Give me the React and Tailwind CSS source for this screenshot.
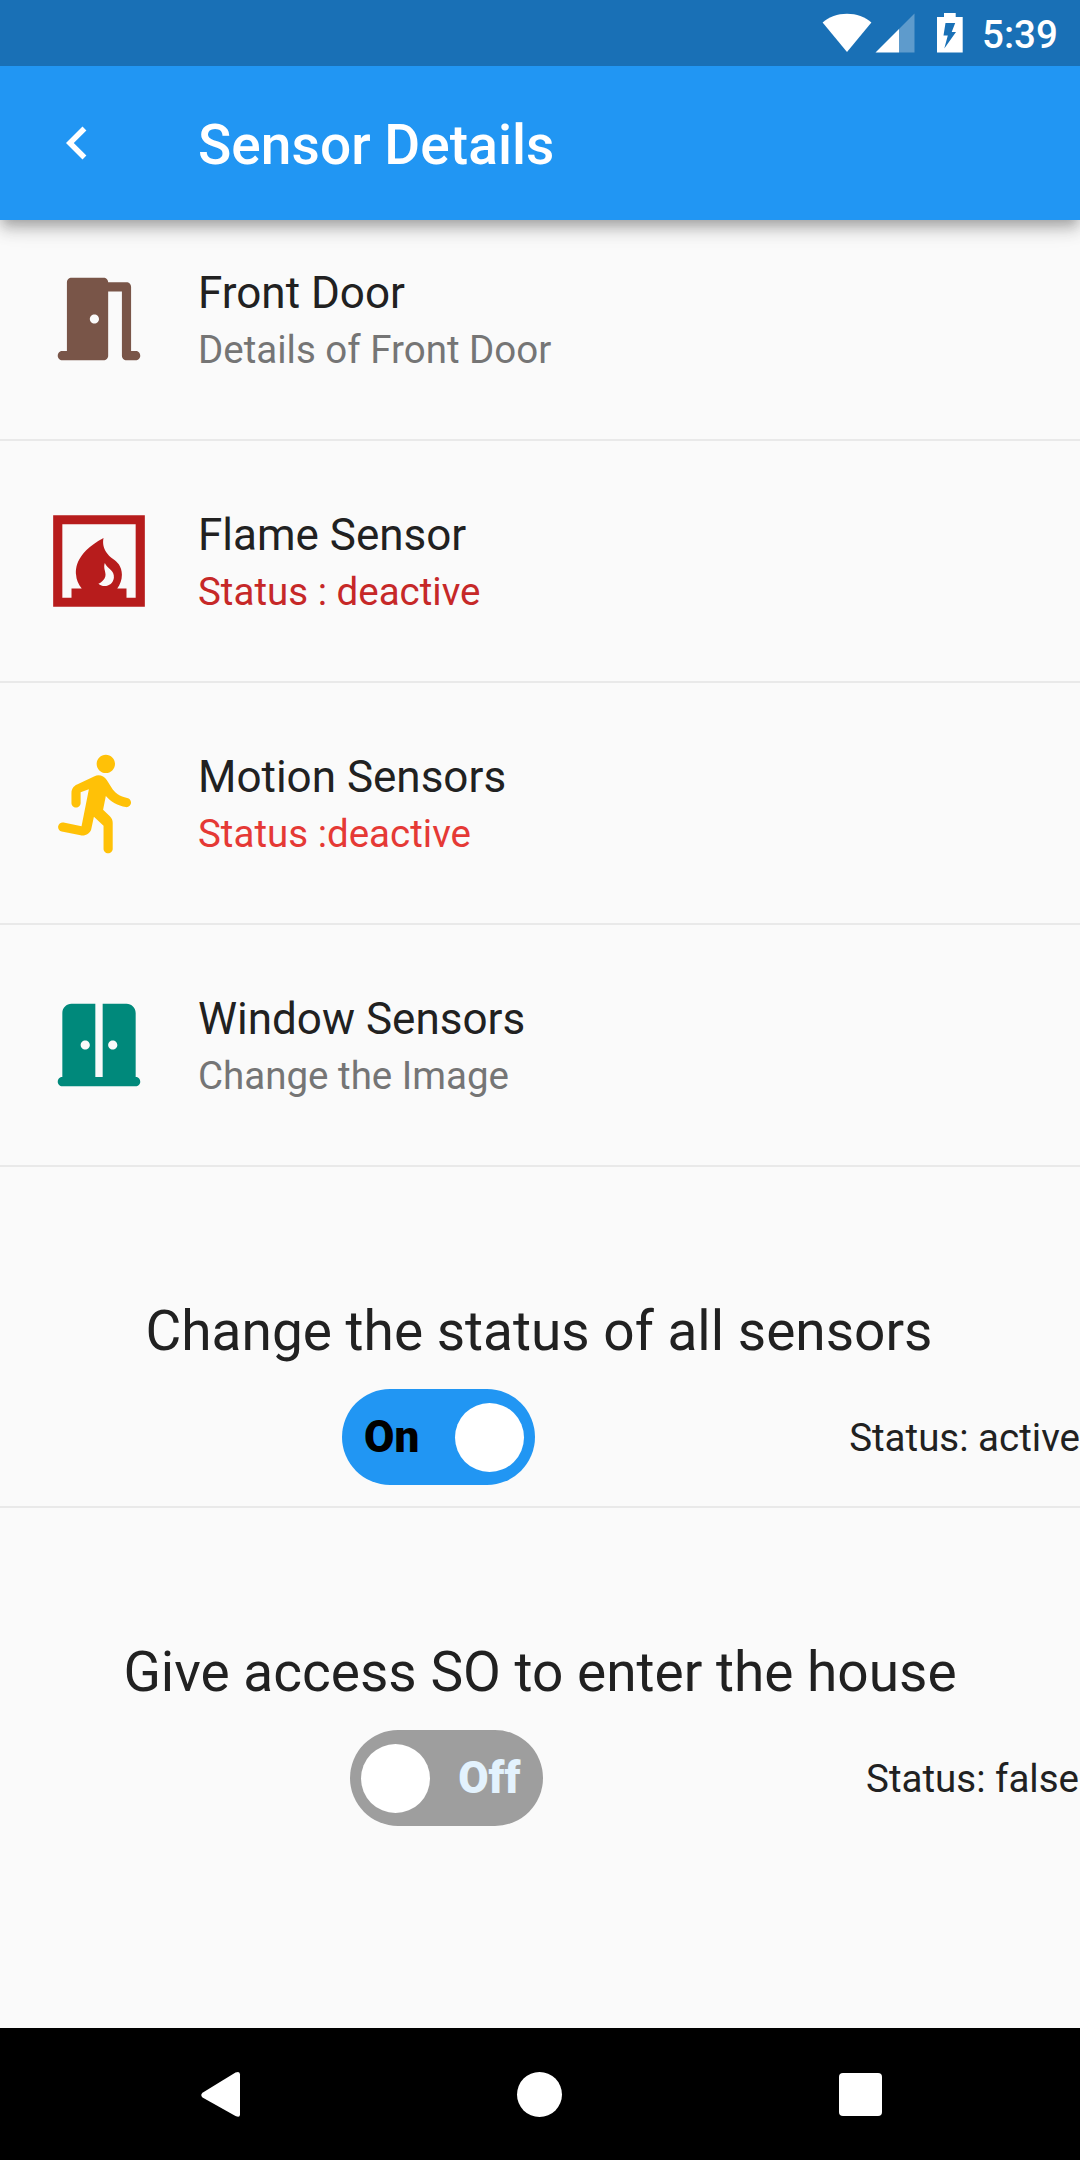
const DOOR =
  'M20 19h-1V5c0-.55-.45-1-1-1h-4c0-.55-.45-1-1-1H6c-.55 0-1 .45-1 1v15H4c-.55 0-1 .45-1 1s.45 1 1 1h9c.55 0 1-.45 1-1V6h3v14c0 .55.45 1 1 1h2c.55 0 1-.45 1-1s-.45-1-1-1zm-9-6c-.55 0-1-.45-1-1s.45-1 1-1 1 .45 1 1-.45 1-1 1z';
const FIREPLACE =
  'M2 2v20h20V2H2zm9.86 14.96c.76-.24 1.4-1.04 1.53-1.63.13-.56-.1-1.05-.2-1.6-.08-.46-.07-.85.08-1.28.54 1.21 2.15 1.64 1.98 3.18-.19 1.7-2.11 2.38-3.39 1.33zM20 20h-2v-2h-2.02c.63-.84 1.02-1.87 1.02-3 0-1.89-1.09-2.85-1.85-3.37C12.2 9.61 13 7 13 7c-6.73 3.57-6.02 7.47-6 8 .03.96.49 2.07 1.23 3H6v2H4V4h16v16z';
const RUNNER =
  'M13.49 5.48c1.1 0 2-.9 2-2s-.9-2-2-2-2 .9-2 2 .9 2 2 2zm-3.2 12.3.6-2.8 2.1 2v5c0 .55.45 1 1 1s1-.45 1-1v-5.64c0-.55-.22-1.07-.62-1.45l-1.48-1.41.6-3c1.07 1.24 2.62 2.13 4.36 2.41.6.09 1.14-.39 1.14-1 0-.49-.36-.9-.85-.98-1.52-.25-2.78-1.15-3.45-2.33l-1-1.6c-.56-.89-1.68-1.25-2.66-.84L7.21 7.98c-.74.31-1.22 1.04-1.22 1.84v2.16c0 .55.45 1 1 1s1-.45 1-1v-2.3l1.8-.7-1.6 8.1-3.92-.8c-.54-.11-1.07.24-1.18.78-.11.54.24 1.07.78 1.18l4.11.82c1.06.21 2.09-.45 2.31-1.28z';
const DOUBLE_DOOR =
  'M20 19V5c0-1.1-.9-2-2-2h-5.2v16h-1.6V3H6c-1.1 0-2 .9-2 2v14c-.55 0-1 .45-1 1s.45 1 1 1h16c.55 0 1-.45 1-1s-.45-1-1-1zM9 13c-.55 0-1-.45-1-1s.45-1 1-1 1 .45 1 1-.45 1-1 1zm6 0c-.55 0-1-.45-1-1s.45-1 1-1 1 .45 1 1-.45 1-1 1z';

const sensors = [
  { title: 'Front Door', note: 'Details of Front Door', path: DOOR, icon: 'text-[#795548]', tone: 'text-[#757575]' },
  { title: 'Flame Sensor', note: 'Status : deactive', path: FIREPLACE, icon: 'text-[#b71c1c]', tone: 'text-[#c62828]' },
  { title: 'Motion Sensors', note: 'Status :deactive', path: RUNNER, icon: 'text-[#ffc107]', tone: 'text-[#e53935]' },
  { title: 'Window Sensors', note: 'Change the Image', path: DOUBLE_DOOR, icon: 'text-[#00897b]', tone: 'text-[#757575]' },
];

function StatusBar() {
  return (
    <div className="flex h-[66px] items-start bg-[#1970b6] pl-[822px] text-white">
      <svg className="mt-[13px] h-10 w-[50px]" viewBox="0 0 50 40" fill="currentColor">
        <path d="M.6 9.4C7 3.600 15.500.700 25 .700s18 2.900 24.400 8.700L25 39z" />
      </svg>
      <svg className="mt-[13px] ml-[3px] h-10 w-10" viewBox="0 0 40 40" fill="currentColor">
        <path d="M39.500.500V39.500H24V16z" opacity=".3" />
        <path d="M24 16V39.500H.500z" />
      </svg>
      <svg className="mt-[13px] ml-[22px] h-10 w-[26px]" viewBox="0 0 26 40">
        <path fill="currentColor" d="M7 0h11.700v4h7v35.500H0V4h7z" />
        <path fill="#1970b6" d="M8.500 10h9.700l-3.500 9h4.300L7.300 35.500 10.800 22.500H6.500z" />
      </svg>
      <span className="mt-[11px] ml-[19px] text-[38.5px] leading-[48px] font-medium">5:39</span>
    </div>
  );
}

function AppBar() {
  return (
    <header className="relative z-10 bg-[#2196f3] text-white shadow-[0_5.5px_11px_-2.75px_rgba(0,0,0,0.2),0_11px_13.75px_0_rgba(0,0,0,0.14),0_2.75px_27.5px_0_rgba(0,0,0,0.12)]">
      <StatusBar />
      <div className="flex h-[154px] items-center pl-11">
        <svg className="h-[66px] w-[66px]" viewBox="0 0 24 24" fill="currentColor">
          <path d="M15.410 7.410 14 6l-6 6 6 6 1.410-1.410L10.830 12z" />
        </svg>
        <h1 className="mt-[3px] ml-[88px] text-[55px] leading-[64px] font-medium tracking-[0.05px]">Sensor Details</h1>
      </div>
    </header>
  );
}

function SensorRow({ title, note, path, icon, tone }) {
  return (
    <li className="flex h-[242px] border-b-2 border-[#e9e9e9] pt-[65px] pl-11">
      <svg className={`h-[110px] w-[110px] shrink-0 ${icon}`} viewBox="0 0 24 24" fill="currentColor">
        <path fillRule="evenodd" d={path} />
      </svg>
      <div className="mt-[3px] ml-11">
        <p className="text-[44px] leading-[52px]">{title}</p>
        <p className={`mt-2 text-[38.5px] leading-[46px] ${tone}`}>{note}</p>
      </div>
    </li>
  );
}

function Switch({ on }) {
  return (
    <button
      className={`flex h-[96.25px] w-[192.5px] items-center justify-between rounded-full px-[11px] text-[44px] leading-[52px] font-black ${
        on ? 'bg-[#2196f3] text-black' : 'flex-row-reverse bg-[#9e9e9e] text-[#e3f2fd]'
      }`}
    >
      <span className="px-[11px]">{on ? 'On' : 'Off'}</span>
      <span className="h-[68.75px] w-[68.75px] rounded-full bg-white" />
    </button>
  );
}

function Control({ title, on, status, className }) {
  return (
    <section className={`flex h-[341px] flex-col pt-[132px] ${className}`}>
      <h2 className={`text-center text-[55px] leading-[64px] ${on ? 'pr-0.5' : ''}`}>{title}</h2>
      <div className={`mt-[26px] flex items-center justify-between ${on ? 'pl-[342px]' : 'pr-px pl-[350px]'}`}>
        <Switch on={on} />
        <span className="pt-0.5 text-[38.5px] leading-[46px]">{status}</span>
      </div>
    </section>
  );
}

function NavBar() {
  return (
    <nav className="flex h-[132px] items-center bg-black pl-[198px] text-white">
      <svg className="h-12 w-11" viewBox="0 0 44 48" fill="currentColor">
        <path d="M4.500 22.700 37.500 2.600Q42 .500 42 4.500V44.500Q42 48 37.500 46L4.500 27.500Q2 25 4.500 22.700z" />
      </svg>
      <span className="ml-[275px] h-[45px] w-[45px] rounded-full bg-white" />
      <span className="mt-px ml-[277px] h-[43px] w-[42.5px] rounded bg-white" />
    </nav>
  );
}

export default function App() {
  return (
    <div className="flex h-[2160px] w-[1080px] flex-col overflow-hidden bg-[#fafafa] font-[Roboto,sans-serif] text-[#212121]">
      <AppBar />
      <main className="flex-1">
        <ul className="-mt-[21px]">
          {sensors.map((s) => (
            <SensorRow key={s.title} {...s} />
          ))}
        </ul>
        <Control title="Change the status of all sensors" on status="Status: active" className="border-b-2 border-[#e9e9e9]" />
        <Control title="Give access SO to enter the house" on={false} status="Status: false" className="" />
      </main>
      <NavBar />
    </div>
  );
}
